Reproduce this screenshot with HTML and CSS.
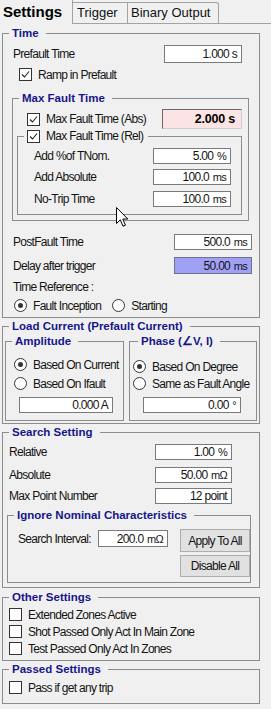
FILE: index.html
```html
<!DOCTYPE html>
<html>
<head>
<meta charset="utf-8">
<link rel="stylesheet" href="styles.css">
</head>
<body>
<div class="tabs">
  <div class="tab tab-settings">Settings</div>
  <div class="tab tab-trigger">Trigger</div>
  <div class="tab tab-binary">Binary Output</div>
</div>
<div class="page">
  <fieldset class="grp g-time">
    <legend>Time</legend>
    <div class="row r-prefault"><span class="lbl">Prefault Time</span><span class="inp in-prefault">1.000 s</span></div>
    <div class="row r-ramp"><span class="cb on"><svg width="11" height="11" viewBox="0 0 11 11"><path d="M2 5.5 L4.5 8 L9 2.5" fill="none" stroke="#222" stroke-width="1.1"/></svg></span><span class="cbl">Ramp in Prefault</span></div>
    <fieldset class="grp g-max">
      <legend>Max Fault Time</legend>
      <div class="row r-abs"><span class="cb on"><svg width="11" height="11" viewBox="0 0 11 11"><path d="M2 5.5 L4.5 8 L9 2.5" fill="none" stroke="#222" stroke-width="1.1"/></svg></span><span class="cbl">Max Fault Time (Abs)</span><span class="inp in-abs">2.000 s</span></div>
      <fieldset class="grp g-rel">
        <legend class="lg-cb"><span class="cb on"><svg width="11" height="11" viewBox="0 0 11 11"><path d="M2 5.5 L4.5 8 L9 2.5" fill="none" stroke="#222" stroke-width="1.1"/></svg></span><span class="cbl">Max Fault Time (Rel)</span></legend>
        <div class="row r-rel r1"><span class="lbl">Add %of TNom.</span><span class="inp in-rel">5.00 <small>%</small></span></div>
        <div class="row r-rel r2"><span class="lbl">Add Absolute</span><span class="inp in-rel">100.0 <small>ms</small></span></div>
        <div class="row r-rel r3"><span class="lbl">No-Trip Time</span><span class="inp in-rel">100.0 <small>ms</small></span></div>
      </fieldset>
    </fieldset>
    <div class="row r-post"><span class="lbl">PostFault Time</span><span class="inp in-post">500.0 <small>ms</small></span></div>
    <div class="row r-delay"><span class="lbl">Delay after trigger</span><span class="inp in-post in-delay">50.00 <small>ms</small></span></div>
    <div class="row r-tref"><span class="lbl">Time Reference :</span></div>
    <div class="row r-radios"><span class="rb on"></span><span class="cbl">Fault Inception</span><span class="rb rb-start"></span><span class="cbl">Starting</span></div>
  </fieldset>

  <fieldset class="grp g-load">
    <legend>Load Current (Prefault Current)</legend>
    <div class="subs">
      <fieldset class="grp g-amp">
        <legend>Amplitude</legend>
        <div class="row r-amp1"><span class="rb on"></span><span class="cbl">Based On Current</span></div>
        <div class="row r-amp2"><span class="rb"></span><span class="cbl">Based On Ifault</span></div>
        <div class="row r-ampin"><span class="inp in-amp">0.000 A</span></div>
      </fieldset>
      <fieldset class="grp g-phase">
        <legend>Phase (∠V, I)</legend>
        <div class="row r-ph1"><span class="rb on"></span><span class="cbl">Based On Degree</span></div>
        <div class="row r-ph2"><span class="rb"></span><span class="cbl">Same as Fault Angle</span></div>
        <div class="row r-phin"><span class="inp in-ph">0.00 <small>°</small></span></div>
      </fieldset>
    </div>
  </fieldset>

  <fieldset class="grp g-search">
    <legend>Search Setting</legend>
    <div class="row r-s r-s1"><span class="lbl">Relative</span><span class="inp in-s">1.00 <small>%</small></span></div>
    <div class="row r-s r-s2"><span class="lbl">Absolute</span><span class="inp in-s">50.00 <small>mΩ</small></span></div>
    <div class="row r-s r-s3"><span class="lbl">Max Point Number</span><span class="inp in-s">12 point</span></div>
    <fieldset class="grp g-ignore">
      <legend>Ignore Nominal Characteristics</legend>
      <div class="ign">
        <div class="ign-left"><span class="lbl">Search Interval:</span><span class="inp in-int">200.0 <small>mΩ</small></span></div>
        <div class="btns">
          <div class="btn btn-apply">Apply To All</div>
          <div class="btn btn-disable">Disable All</div>
        </div>
      </div>
    </fieldset>
  </fieldset>

  <fieldset class="grp g-other">
    <legend>Other Settings</legend>
    <div class="row r-chk r-o1"><span class="cb"></span><span class="cbl">Extended Zones Active</span></div>
    <div class="row r-chk"><span class="cb"></span><span class="cbl">Shot Passed Only Act In Main Zone</span></div>
    <div class="row r-chk"><span class="cb"></span><span class="cbl">Test Passed Only Act In Zones</span></div>
  </fieldset>

  <fieldset class="grp g-passed">
    <legend>Passed Settings</legend>
    <div class="row r-chk r-p1"><span class="cb"></span><span class="cbl">Pass if get any trip</span></div>
  </fieldset>
</div>

<svg class="cursor" width="13" height="21" viewBox="0 0 13 21"><path d="M0.5 0.5 L0.5 16.5 L4.3 12.8 L7 19.2 L9.4 18.2 L6.8 12 L11.8 12 Z" fill="#fff" stroke="#000" stroke-width="1" stroke-linejoin="miter"/></svg>
</body>
</html>
```

FILE: styles.css
```css
* { box-sizing: border-box; }

body {
  margin: 0;
  width: 271px;
  height: 709px;
  overflow: hidden;
  position: relative;
  background: #f0f0f0;
  font-family: "Liberation Sans", Arial, sans-serif;
  font-size: 12px;
  letter-spacing: -0.7px;
  color: #141414;
}

/* ---------- tabs ---------- */
.tabs {
  display: flex;
  align-items: flex-end;
  height: 24px;
  border-bottom: 1px solid #a3a3a3;
  letter-spacing: 0;
}
.tab {
  height: 21px;
  border-top: 1px solid #a3a3a3;
  border-right: 1px solid #a3a3a3;
  background: #f0f0f0;
  font-size: 13px;
  line-height: 19px;
  white-space: nowrap;
  color: #111;
}
.tab-settings {
  width: 73px;
  height: 24px;
  margin-bottom: -1px;
  border-top: none;
  padding-left: 3px;
  font-size: 15px;
  font-weight: bold;
  line-height: 23px;
  color: #000;
}
.tab-trigger { width: 55px; padding-left: 4px; }
.tab-binary { width: 91px; padding-left: 3px; border-top-right-radius: 3px; }

.page { padding-top: 3px; }

/* ---------- group boxes ---------- */
.grp {
  margin: 0;
  padding: 0;
  border: 1px solid #8c8c8c;
  min-width: 0;
}
.grp > legend {
  margin-left: 6px;
  padding: 0 7px 0 3px;
  height: 13px;
  line-height: 13px;
  font-weight: bold;
  font-size: 11.5px;
  letter-spacing: 0;
  color: #16168a;
  white-space: nowrap;
}
.grp > legend.lg-cb {
  display: flex;
  align-items: center;
  font-weight: normal;
  font-size: 12px;
  letter-spacing: -0.7px;
  color: #141414;
  padding-right: 5px;
}

.row { display: flex; align-items: center; white-space: nowrap; }
.lbl { flex: 1; }
.cbl { margin-left: 6px; }

.cb {
  flex: none;
  width: 13px;
  height: 13px;
  border: 1px solid #333;
  background: #fff;
  display: flex;
}
.rb {
  flex: none;
  width: 13px;
  height: 13px;
  border: 1px solid #333;
  border-radius: 50%;
  background: #fff;
  display: flex;
  align-items: center;
  justify-content: center;
}
.rb.on::after {
  content: "";
  width: 5px;
  height: 5px;
  border-radius: 50%;
  background: #333;
}

.inp {
  flex: none;
  display: flex;
  align-items: center;
  justify-content: flex-end;
  height: 16px;
  padding-right: 4px;
  background: #fff;
  border: 1px solid #7a7a7a;
  white-space: pre;
}
.inp small { font-size: 11px; margin-left: 1px; }

/* ---------- Time ---------- */
.g-time { margin: 0 11px 0 2px; padding-bottom: 5px; }
.r-prefault { margin-top: 5px; height: 18px; padding-left: 10px; padding-right: 17px; }
.in-prefault { width: 78px; height: 18px; }
.r-ramp { margin-top: 5px; height: 13px; padding-left: 16px; }

.g-max { margin: 11px 10px 0 9px; padding-bottom: 5px; }
.r-abs { margin-top: 4px; height: 20px; padding-left: 14px; padding-right: 6px; }
.r-abs .cbl { flex: 1; }
.in-abs {
  width: 80px;
  height: 20px;
  background: #fde4e4;
  border-color: #6a6a6a #cfcfcf #cfcfcf #6a6a6a;
  font-weight: bold;
  font-size: 12.5px;
  letter-spacing: -0.2px;
  color: #000;
  padding-right: 6px;
}

.g-rel { margin: 1px 6px 0 4px; padding-bottom: 7px; }
.r-rel { height: 16px; padding-left: 16px; padding-right: 10px; }
.r-rel.r1 { margin-top: 5px; }
.r-rel.r2 { margin-top: 5px; }
.r-rel.r3 { margin-top: 6px; }
.in-rel { width: 78px; }

.r-post { margin-top: 13px; height: 16px; padding-left: 10px; padding-right: 7px; }
.in-post { width: 78px; }
.r-delay { margin-top: 7px; height: 17px; padding-left: 10px; padding-right: 7px; }
.in-delay { height: 17px; background: #a0a0f4; border-color: #6f6f8f; }
.r-tref { margin-top: 6px; height: 14px; padding-left: 10px; }
.r-radios { margin-top: 5px; height: 13px; padding-left: 11px; }
.rb-start { margin-left: 11px; }

/* ---------- Load current ---------- */
.g-load { margin: 2px 11px 0 2px; padding-bottom: 2px; }
.subs { display: flex; margin-top: 2px; padding-left: 2px; padding-right: 2px; gap: 5px; }
.g-amp { width: 119px; padding-bottom: 7px; }
.g-phase { flex: 1; padding-bottom: 7px; }
.g-phase > legend { margin-left: 8px; }
.r-amp1 { margin-top: 10px; height: 13px; padding-left: 8px; }
.r-amp2 { margin-top: 6px; height: 13px; padding-left: 8px; }
.r-ampin { margin-top: 7px; padding-left: 13px; }
.in-amp { width: 94px; }
.r-ph1 { margin-top: 12px; height: 13px; padding-left: 3px; }
.r-ph2 { margin-top: 4px; height: 13px; padding-left: 3px; }
.r-phin { margin-top: 7px; padding-left: 13px; }
.in-ph { width: 98px; }

/* ---------- Search ---------- */
.g-search { margin: 2px 11px 0 2px; padding-bottom: 4px; }
.r-s { height: 16px; padding-left: 6px; padding-right: 27px; }
.r-s1 { margin-top: 5px; }
.r-s2 { margin-top: 7px; }
.r-s3 { margin-top: 5px; }
.in-s { width: 77px; }

.g-ignore { margin: 5px 8px 0 4px; padding-bottom: 5px; }
.ign { display: flex; align-items: flex-start; }
.ign-left { display: flex; align-items: center; margin-top: 8px; height: 17px; padding-left: 10px; flex: 1; white-space: nowrap; }
.ign-left .lbl { flex: none; width: 80px; }
.in-int { width: 70px; height: 17px; }
.btns { display: flex; flex-direction: column; gap: 3px; margin-top: 7px; }
.btn {
  width: 70px;
  background: #e1e1e1;
  border: 1px solid #adadad;
  display: flex;
  align-items: center;
  justify-content: center;
  white-space: nowrap;
}
.btn-apply { height: 23px; }
.btn-disable { height: 22px; }

/* ---------- Other / Passed ---------- */
.g-other { margin: 3px 11px 0 2px; padding-bottom: 3px; }
.r-chk { height: 17px; padding-left: 6px; }
.r-o1 { margin-top: 2px; }
.g-passed { margin: 2px 11px 0 2px; padding-bottom: 7px; }
.r-p1 { margin-top: 3px; }

/* mouse pointer lying over the content */
.cursor { position: absolute; left: 116px; top: 207px; }
```
